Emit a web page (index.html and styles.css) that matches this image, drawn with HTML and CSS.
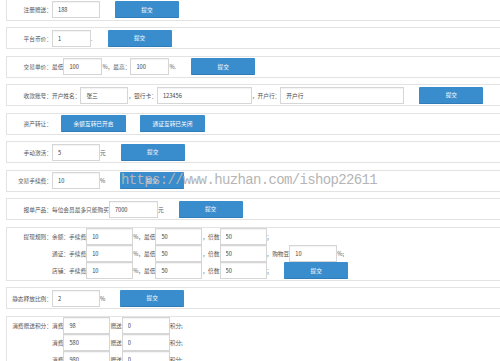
FILE: index.html
```html
<!DOCTYPE html>
<html lang="zh-CN">
<head>
    <meta charset="UTF-8">
    <meta name="viewport" content="width=device-width, initial-scale=1.0">
    <title>系统参数设置</title>
    <link rel="stylesheet" href="styles.css">
</head>
<body>
    <div class="wrap">
        <div class="box">
            <div class="lbl">注册赠送：</div>
            <div class="body">
                <div class="line"><input class="ipt w48" value="188"><button class="btn">提交</button></div>
            </div>
        </div>

        <div class="box">
            <div class="lbl">平台币价：</div>
            <div class="body">
                <div class="line"><input class="ipt w39" value="1"><span>.</span><button class="btn">提交</button></div>
            </div>
        </div>

        <div class="box">
            <div class="lbl">交易单价：</div>
            <div class="body">
                <div class="line"><span>最低</span><input class="ipt w39" value="100"><span>%，最高：</span><input class="ipt w39" value="100"><span>%.</span><button class="btn">提交</button></div>
            </div>
        </div>

        <div class="box">
            <div class="lbl">收款账号：</div>
            <div class="body">
                <div class="line"><span>开户姓名：</span><input class="ipt w48" value="张三"><span>，银行卡：</span><input class="ipt w95" value="123456"><span>，开户行：</span><input class="ipt w124" value="开户行"><button class="btn">提交</button></div>
            </div>
        </div>

        <div class="box">
            <div class="lbl">资产转让：</div>
            <div class="body">
                <div class="line"><button class="btn turn">余额互转已开启</button><button class="btn turn">通证互转已关闭</button></div>
            </div>
        </div>

        <div class="box">
            <div class="lbl">手动激活：</div>
            <div class="body">
                <div class="line"><input class="ipt w48" value="5"><span>元</span><button class="btn">提交</button></div>
            </div>
        </div>

        <div class="box">
            <div class="lbl">交易手续费：</div>
            <div class="body">
                <div class="line"><input class="ipt w48" value="10"><span>%</span><button class="btn">提交</button></div>
            </div>
        </div>

        <div class="box">
            <div class="lbl">报单产品：</div>
            <div class="body">
                <div class="line"><span>每位会员最多只能购买</span><input class="ipt w49" value="7000"><span>元</span><button class="btn">提交</button></div>
            </div>
        </div>

        <div class="box multi">
            <div class="lbl">提现规则：</div>
            <div class="body">
                <div class="line"><span>余额：手续费</span><input class="ipt w47" value="10"><span>%，最低</span><input class="ipt w47" value="50"><span>，倍数</span><input class="ipt w47" value="50"><span>；</span></div>
                <div class="line"><span>通证：手续费</span><input class="ipt w47" value="10"><span>%，最低</span><input class="ipt w47" value="50"><span>，倍数</span><input class="ipt w47" value="50"><span>，购物豆</span><input class="ipt w48" value="10"><span>%;</span></div>
                <div class="line"><span>店铺：手续费</span><input class="ipt w47" value="10"><span>%，最低</span><input class="ipt w47" value="50"><span>，倍数</span><input class="ipt w47" value="50"><span>；</span><button class="btn near">提交</button></div>
            </div>
        </div>

        <div class="box">
            <div class="lbl">静态释放比例：</div>
            <div class="body">
                <div class="line"><input class="ipt w48" value="2"><span>%</span><button class="btn">提交</button></div>
            </div>
        </div>

        <div class="box multi">
            <div class="lbl">消费赠送积分：</div>
            <div class="body">
                <div class="line"><span>消费</span><input class="ipt w47" value="98"><span>赠送</span><input class="ipt w48" value="0"><span>积分;</span></div>
                <div class="line"><span>消费</span><input class="ipt w47" value="580"><span>赠送</span><input class="ipt w48" value="0"><span>积分;</span></div>
                <div class="line"><span>消费</span><input class="ipt w47" value="980"><span>赠送</span><input class="ipt w48" value="0"><span>积分;</span></div>
            </div>
        </div>
    </div>

    <div class="mark">https://www.huzhan.com/ishop22611</div>
</body>
</html>
```

FILE: styles.css
```css
* {
    margin: 0;
    padding: 0;
    box-sizing: border-box;
}

body {
    font-family: "Noto Sans CJK SC", "Noto Sans", sans-serif;
    font-size: 5.7px;
    color: #555;
    background: #fff;
    overflow: hidden;
    position: relative;
    height: 361px;
}

.wrap {
    margin-top: -1.5px;
    padding-left: 6px;
}

.box {
    display: flex;
    width: 520px;
    border: 1px solid #e3e3e3;
    padding: 1.5px 0;
    margin-bottom: 6.5px;
}

.box.multi {
    padding: 0.5px 0;
}

.lbl {
    flex: none;
    width: 45px;
    text-align: right;
    line-height: 17px;
    white-space: nowrap;
}

.line {
    display: flex;
    align-items: center;
    height: 17px;
    white-space: nowrap;
}

.ipt {
    height: 17px;
    border: 1px solid #d6d6d6;
    box-shadow: inset 0 1px 1px rgba(0, 0, 0, 0.05);
    padding: 0 5px;
    font-family: inherit;
    font-size: 5.7px;
    color: #444;
    background: #fff;
    outline: none;
}

.w39 { width: 39px; }
.w47 { width: 47px; }
.w48 { width: 48px; }
.w49 { width: 49px; }
.w95 { width: 95px; }
.w124 { width: 124px; }

.btn {
    width: 64px;
    height: 17px;
    margin-left: 15px;
    background-color: #3a8dcd;
    border: none;
    border-bottom: 1px solid #2f7cb8;
    border-radius: 1px;
    color: #fff;
    font-family: inherit;
    font-size: 5.7px;
    cursor: pointer;
}

.btn:hover {
    background-color: #2f7fbf;
}

.btn.turn {
    width: 65px;
    margin-left: 9px;
}

.btn.turn + .btn.turn {
    margin-left: 14px;
}

.btn.near {
    margin-left: 12px;
}

.mark {
    position: absolute;
    left: 121px;
    top: 171px;
    font-family: "Liberation Mono", monospace;
    font-size: 14px;
    letter-spacing: -0.64px;
    line-height: 18px;
    color: #b5b5b5;
    white-space: nowrap;
    pointer-events: none;
}
```
